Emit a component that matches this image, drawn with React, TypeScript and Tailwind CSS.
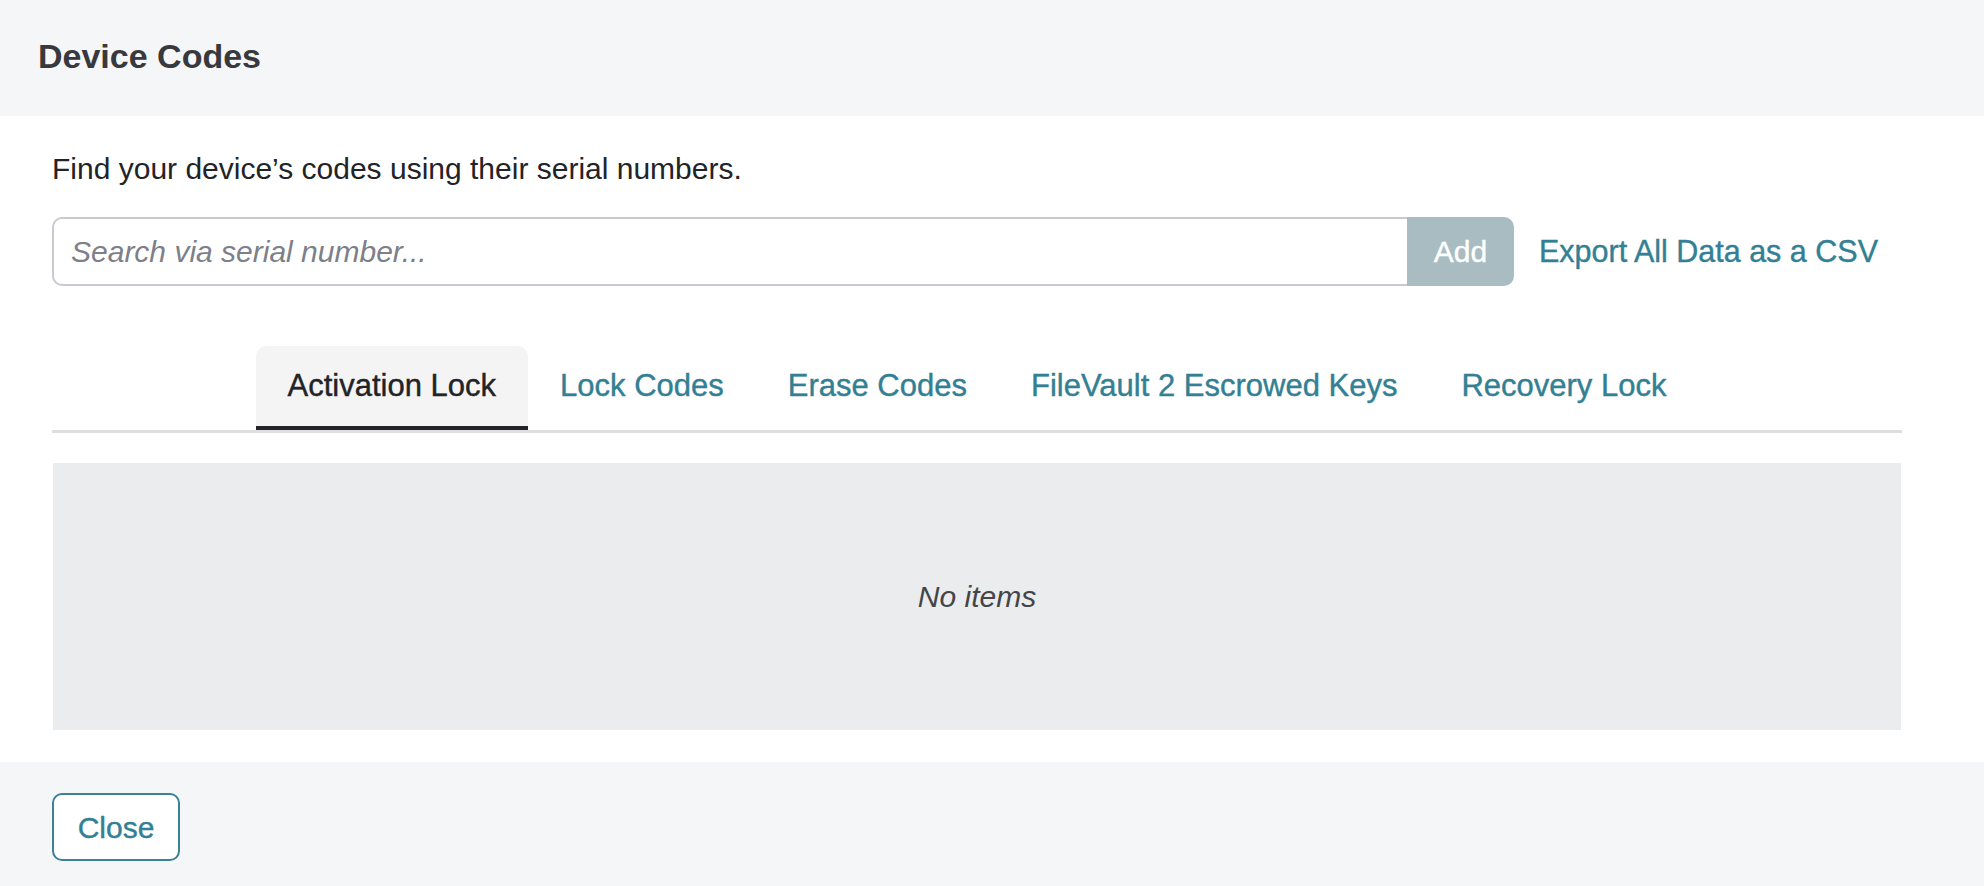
import { useState } from "react";

const tabs = [
  "Activation Lock",
  "Lock Codes",
  "Erase Codes",
  "FileVault 2 Escrowed Keys",
  "Recovery Lock",
];

export default function App() {
  const [active, setActive] = useState(0);
  const [serial, setSerial] = useState("");

  return (
    <div
      className="h-screen overflow-hidden bg-white flex flex-col"
      style={{ fontFamily: "'Liberation Sans', Arial, sans-serif" }}
    >
      {/* Header */}
      <div className="h-[116px] shrink-0 flex items-center pl-[38px] pb-[4px] bg-[#f5f6f8]">
        <h1 className="text-[34px] font-bold text-[#38393c] leading-none">Device Codes</h1>
      </div>

      {/* Body */}
      <div className="shrink-0 pl-[52px] pr-[82px] pt-[35px] pb-[32px]">
        <p className="text-[30px] leading-[36px] text-[#222326]">
          Find your device’s codes using their serial numbers.
        </p>

        <div className="flex items-center mt-[30px]">
          <div className="flex flex-1 h-[69px]">
            <input
              value={serial}
              onChange={(e) => setSerial(e.target.value)}
              placeholder="Search via serial number..."
              className="flex-1 min-w-0 h-full px-[17px] text-[30px] rounded-l-[10px] border-2 border-r-0 border-[#c9c9cf] outline-none placeholder:italic placeholder:text-[#7d8088] text-[#222326]"
            />
            <button className="w-[107px] h-full rounded-r-[10px] bg-[#a9bcc2] text-white text-[30px] [-webkit-text-stroke:0.4px_white]">
              Add
            </button>
          </div>
          <a className="ml-[25px] mr-[24px] text-[30.5px] text-[#337f93] [-webkit-text-stroke:0.4px_#337f93] cursor-pointer whitespace-nowrap">
            Export All Data as a CSV
          </a>
        </div>

        {/* Tabs */}
        <div className="mt-[60px] border-b-[3px] border-[#dddde2] flex justify-center">
          {tabs.map((tab, idx) => (
            <button
              key={tab}
              onClick={() => setActive(idx)}
              className={
                idx === active
                  ? "h-[84px] px-[32px] rounded-t-[10px] bg-[#f4f4f4] border-b-4 border-[#222326] text-[31px] text-[#222326] [-webkit-text-stroke:0.4px_#222326] whitespace-nowrap"
                  : "h-[84px] px-[32px] pb-[4px] text-[31px] text-[#337f93] [-webkit-text-stroke:0.4px_#337f93] whitespace-nowrap"
              }
            >
              {tab}
            </button>
          ))}
        </div>

        {/* Empty state */}
        <div className="mt-[30px] mx-px h-[267px] bg-[#ebecee] flex items-center justify-center">
          <span className="text-[30px] italic text-[#444549]">No items</span>
        </div>
      </div>

      {/* Footer */}
      <div className="flex-1 bg-[#f5f6f8] pl-[52px] pt-[31px]">
        <button className="w-[128px] h-[68px] rounded-[10px] border-2 border-[#3a8297] bg-white text-[30px] text-[#337f93] [-webkit-text-stroke:0.4px_#337f93]">
          Close
        </button>
      </div>
    </div>
  );
}
